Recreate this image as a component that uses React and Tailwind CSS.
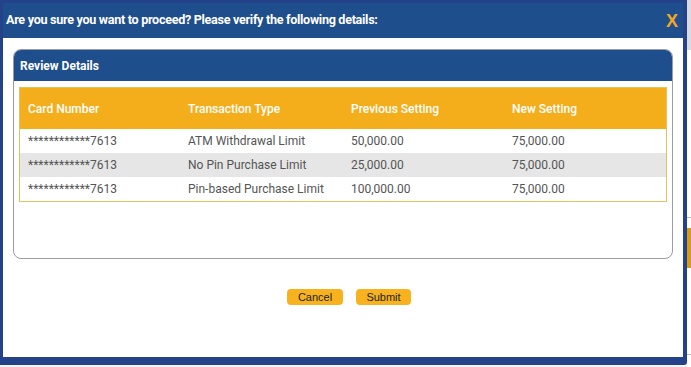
import React from "react";

const rows = [
  { card: "************7613", type: "ATM Withdrawal Limit", prev: "50,000.00", next: "75,000.00" },
  { card: "************7613", type: "No Pin Purchase Limit", prev: "25,000.00", next: "75,000.00" },
  { card: "************7613", type: "Pin-based Purchase Limit", prev: "100,000.00", next: "75,000.00" },
];

const cols = "grid grid-cols-[160px_163px_161px_1fr]";

export default function App() {
  return (
    <div className="w-[691px] h-[367px] flex bg-[#f4f4f4] overflow-hidden font-['Roboto',sans-serif]">
      {/* modal */}
      <div className="w-[687px] h-[365px] shrink-0 bg-[#24428a] pt-[3px] pl-[3px] pr-[4px] pb-[8px] rounded-br-[3px] flex flex-col">
        <div className="h-[35px] bg-[#1f4e8c] flex items-center justify-between pl-[3px] pr-[5px]">
          <h1 className="text-white font-bold text-[12.6px] tracking-[-0.3px]">
            Are you sure you want to proceed? Please verify the following details:
          </h1>
          <button className="text-[#f5a623] font-bold text-[18px] leading-none font-['Liberation_Sans',sans-serif]">X</button>
        </div>

        <div className="flex-1 bg-white pt-[11px] px-[10px]">
          <div className="h-[210px] border border-[#9c9c9c] rounded-[8px] overflow-hidden flex flex-col">
            <div className="h-[31px] shrink-0 bg-[#1f4e8c] flex items-center pl-[6px]">
              <span className="text-white font-bold text-[12px]">Review Details</span>
            </div>
            <div className="pt-[6px] px-[5px]">
              <div className="border border-[#e0c25e]">
                <div className={`${cols} h-[41px] items-center bg-[#f5ae1b] text-white text-[12px] font-medium`}>
                  <div className="pl-[8px]">Card Number</div>
                  <div className="pl-[8px]">Transaction Type</div>
                  <div className="pl-[8px]">Previous Setting</div>
                  <div className="pl-[8px]">New Setting</div>
                </div>
                {rows.map((r, i) => (
                  <div
                    key={i}
                    className={`${cols} h-[24px] items-center text-[12px] text-[#555] ${i === 1 ? "bg-[#e6e6e6]" : "bg-white"}`}
                  >
                    <div className="pl-[8px]">{r.card}</div>
                    <div className="pl-[8px]">{r.type}</div>
                    <div className="pl-[8px]">{r.prev}</div>
                    <div className="pl-[8px]">{r.next}</div>
                  </div>
                ))}
              </div>
            </div>
          </div>

          <div className="flex justify-center gap-[13px] mt-[30px] pl-[12px]">
            <button className="w-[56px] h-[16px] rounded-[4px] bg-[#f7b21e] text-[#222] text-[11px] leading-none font-['Liberation_Sans',sans-serif]">
              Cancel
            </button>
            <button className="w-[55px] h-[16px] rounded-[4px] bg-[#f7b21e] text-[#222] text-[11px] leading-none font-['Liberation_Sans',sans-serif]">
              Submit
            </button>
          </div>
        </div>
      </div>

      {/* page behind */}
      <div className="flex-1 flex flex-col bg-white">
        <div className="h-[50px] bg-[#d8dbe2]" />
        <div className="h-[167px]" />
        <div className="h-px bg-[#bbb]" />
        <div className="h-[10px]" />
        <div className="h-[40px] bg-[#d89a1a]" />
        <div className="h-[86px]" />
        <div className="h-px bg-[#bbb]" />
      </div>
    </div>
  );
}
